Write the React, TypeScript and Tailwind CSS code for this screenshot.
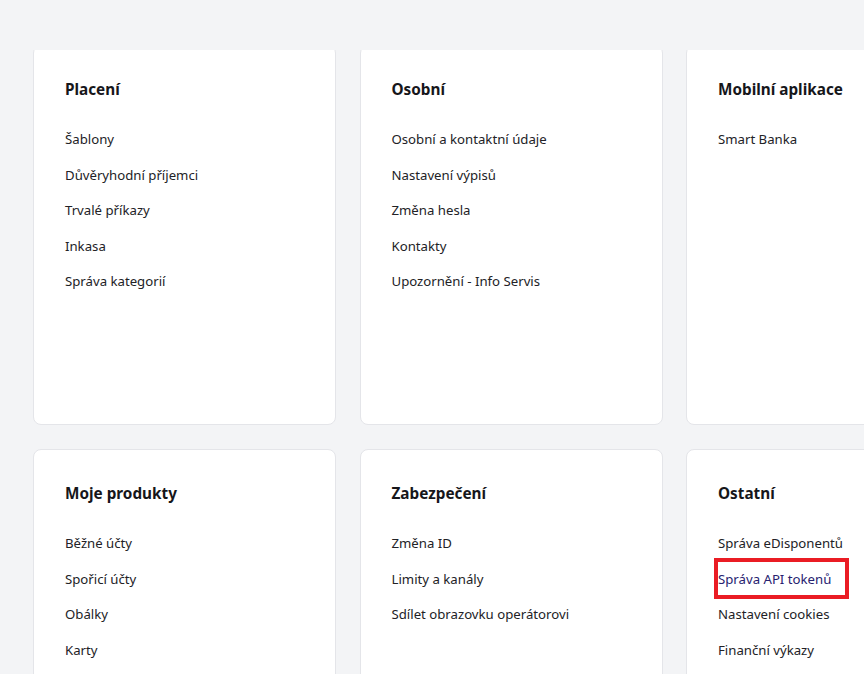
import React from "react";

type Card = { title: string; items: string[] };

const rows: Card[][] = [
  [
    { title: "Placení", items: ["Šablony", "Důvěryhodní příjemci", "Trvalé příkazy", "Inkasa", "Správa kategorií"] },
    { title: "Osobní", items: ["Osobní a kontaktní údaje", "Nastavení výpisů", "Změna hesla", "Kontakty", "Upozornění - Info Servis"] },
    { title: "Mobilní aplikace", items: ["Smart Banka"] },
  ],
  [
    { title: "Moje produkty", items: ["Běžné účty", "Spořicí účty", "Obálky", "Karty"] },
    { title: "Zabezpečení", items: ["Změna ID", "Limity a kanály", "Sdílet obrazovku operátorovi"] },
    { title: "Ostatní", items: ["Správa eDisponentů", "Správa API tokenů", "Nastavení cookies", "Finanční výkazy"] },
  ],
];

function CardView({ card }: { card: Card }) {
  return (
    <div className="h-[380px] w-[303px] shrink-0 rounded-lg border border-[#e4e5e9] bg-white px-[31px] pt-[31px]">
      <h2 className="text-[15.3px] font-bold leading-6 text-[#16161a]">{card.title}</h2>
      <ul className="mt-7 flex flex-col gap-[15.5px]">
        {card.items.map((it) => (
          <li key={it} className="relative text-[13.2px] leading-5">
            {it === "Správa API tokenů" ? (
              <>
                <span className="text-[#27226f]">{it}</span>
                <span className="absolute left-[-4px] top-[-11px] h-[41px] w-[135px] border-4 border-[#ea1c24]" />
              </>
            ) : (
              <span className="text-[#222226]">{it}</span>
            )}
          </li>
        ))}
      </ul>
    </div>
  );
}

export default function App() {
  return (
    <div
      className="h-[674px] w-[864px] overflow-hidden bg-[#f3f4f6] pt-[50px]"
      style={{ fontFamily: '"Noto Sans", "Open Sans", sans-serif' }}
    >
      <div className="h-[624px] overflow-hidden">
        <div className="-mt-[5px] flex flex-col gap-6 pl-[33px]">
          {rows.map((row, i) => (
            <div key={i} className="flex gap-[23.5px]">
              {row.map((c) => (
                <CardView key={c.title} card={c} />
              ))}
            </div>
          ))}
        </div>
      </div>
    </div>
  );
}
